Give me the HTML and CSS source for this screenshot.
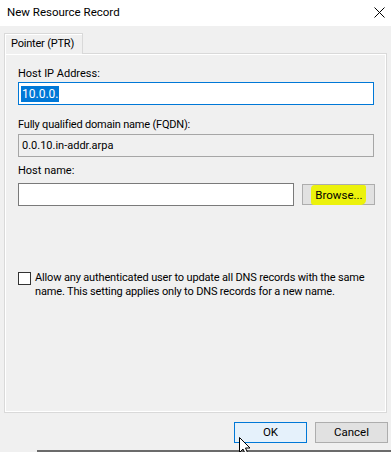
FILE: index.html
```html
<!DOCTYPE html>
<html>
<head>
<meta charset="utf-8">
<link rel="stylesheet" href="styles.css">
</head>
<body>
<div class="window">
  <div class="titlebar">
    <span class="title">New Resource Record</span>
    <svg class="close" width="11" height="11" viewBox="0 0 11 11"><path d="M0.5 0.5L10.5 10.5M10.5 0.5L0.5 10.5" stroke="#000" stroke-width="1" fill="none"/></svg>
  </div>
  <div class="content">
    <div class="tabs"><div class="tab">Pointer (PTR)</div></div>
    <div class="panel">
      <div class="label l1">Host IP Address:</div>
      <div class="input focused"><span class="sel">10.0.0.</span></div>
      <div class="label l2">Fully qualified domain name (FQDN):</div>
      <div class="input disabled">0.0.10.in-addr.arpa</div>
      <div class="label l3">Host name:</div>
      <div class="row">
        <div class="input host"></div>
        <div class="btn browse"><span class="hl">Browse...</span></div>
      </div>
      <div class="check-row">
        <div class="checkbox"></div>
        <div class="check-text"><span class="line">Allow any authenticated user to update all DNS records with the same</span><span class="line">name. This setting applies only to DNS records for a new name.</span></div>
      </div>
    </div>
    <div class="buttons">
      <div class="btn ok">OK</div>
      <div class="btn cancel">Cancel</div>
    </div>
  </div>
  <div class="edge"></div>
  <svg class="cursor" width="14" height="20" viewBox="0 0 14 20"><path d="M1.5 1.5L1.5 16.5L5 13L7.5 18.5L10 17.5L7.5 12L12 12Z" fill="#fff" stroke="#000" stroke-width="1" stroke-linejoin="miter"/></svg>
</div>
</body>
</html>
```
FILE: styles.css
```css
html, body {
  margin: 0;
  padding: 0;
}
body {
  width: 391px;
  height: 452px;
  overflow: hidden;
  background: #f0f0f0;
  font-family: Roboto, "Liberation Sans", Arial, sans-serif;
  font-size: 11px;
  color: #000;
}
.window {
  position: relative;
  width: 391px;
  height: 452px;
  display: flex;
  flex-direction: column;
}
.titlebar {
  height: 26px;
  background: #fff;
  display: flex;
  align-items: center;
  justify-content: space-between;
  padding: 0 6px 0 7px;
  flex: none;
}
.title {
  font-size: 11.5px;
  line-height: 15px;
  margin-top: -1px;
  white-space: nowrap;
}
.close {
  display: block;
  margin-top: -1px;
}
.content {
  padding: 7px 0 0 4px;
  flex: 1;
}
.tabs {
  display: flex;
  height: 20px;
}
.tab {
  position: relative;
  z-index: 1;
  box-sizing: border-box;
  width: 79px;
  height: 21px;
  border: 1px solid #d9d9d9;
  border-bottom: none;
  box-shadow: inset 1px 1px 0 #fff;
  background: #f0f0f0;
  line-height: 19px;
  padding-left: 6px;
  white-space: nowrap;
  letter-spacing: -0.2px;
}
.panel {
  width: 383px;
  height: 360px;
  box-sizing: border-box;
  border: 1px solid #d9d9d9;
  box-shadow: inset 1px 1px 0 #fff, inset -1px -1px 0 #fff;
  padding: 0 0 0 13px;
  display: flex;
  flex-direction: column;
}
.label {
  line-height: 15px;
  height: 15px;
  white-space: nowrap;
}
.l1 { margin-top: 12px; margin-bottom: 1px; }
.l2 { margin-top: 12px; margin-bottom: 2px; letter-spacing: -0.2px; }
.l3 { margin-top: 6px; margin-bottom: 5px; }
.input {
  box-sizing: border-box;
  width: 356px;
  height: 23px;
  border: 1px solid #7a7a7a;
  background: #fff;
  line-height: 21px;
  padding-left: 2px;
  white-space: nowrap;
}
.input.focused {
  border-color: #0078d7;
  display: flex;
  align-items: center;
}
.sel {
  background: #0078d7;
  color: #fff;
  line-height: 16px;
  padding: 0 1px;
  font-size: 12px;
}
.input.disabled {
  background: #f0f0f0;
  border-color: #a6a6a6;
  padding-left: 3px;
}
.row {
  display: flex;
  gap: 8px;
  align-items: flex-start;
}
.input.host {
  width: 276px;
  height: 23px;
}
.btn {
  box-sizing: border-box;
  width: 73px;
  height: 21px;
  border: 1px solid #adadad;
  background: #e1e1e1;
  display: flex;
  align-items: center;
  justify-content: center;
  line-height: 15px;
  white-space: nowrap;
  font-size: 11.5px;
}
.browse {
  margin-top: 1px;
}
.hl {
  background: #ecf20c;
  padding: 3px 3px 2px 4px;
  border-radius: 4px 2px 5px 3px;
}
.check-row {
  display: flex;
  margin-top: 65px;
}
.checkbox {
  box-sizing: border-box;
  width: 13px;
  height: 13px;
  border: 1px solid #333;
  background: #fff;
  flex: none;
  margin-top: 1px;
}
.check-text {
  margin-left: 4px;
  line-height: 14px;
  display: flex;
  flex-direction: column;
  letter-spacing: -0.15px;
}
.line {
  white-space: nowrap;
}
.buttons {
  display: flex;
  gap: 8px;
  padding-left: 230px;
  margin-top: 9px;
}
.btn.ok {
  border-color: #0078d7;
  background: #e5f1fb;
}
.edge {
  position: absolute;
  left: 37px;
  right: 0;
  top: 450px;
  height: 2px;
  background: #6b6b6b;
}
.cursor {
  position: absolute;
  left: 238px;
  top: 436px;
}
```
